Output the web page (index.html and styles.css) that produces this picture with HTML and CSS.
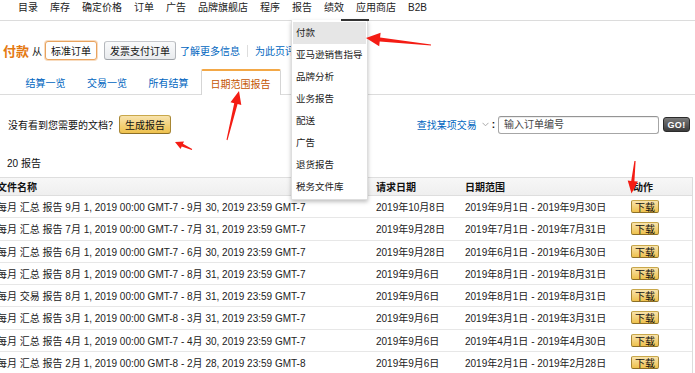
FILE: index.html
```html
<!DOCTYPE html>
<html lang="zh-CN">
<head>
<meta charset="utf-8">
<title>付款 - 日期范围报告</title>
<link rel="stylesheet" href="styles.css">
</head>
<body>
<div class="page">
  <nav class="topnav">
    <span class="nav-item">目录</span>
    <span class="nav-item">库存</span>
    <span class="nav-item">确定价格</span>
    <span class="nav-item">订单</span>
    <span class="nav-item">广告</span>
    <span class="nav-item">品牌旗舰店</span>
    <span class="nav-item">程序</span>
    <span class="nav-item">报告</span>
    <span class="nav-item">绩效</span>
    <span class="nav-item">应用商店</span>
    <span class="nav-item">B2B</span>
  </nav>

  <div class="title-row">
    <span class="page-title">付款</span>
    <span class="from">从</span>
    <span class="btn btn-selected">标准订单</span>
    <span class="btn btn-plain">发票支付订单</span>
    <a class="link learn">了解更多信息</a>
    <span class="sep"></span>
    <a class="link">为此页评级</a>
  </div>

  <div class="tabs">
    <span class="tab">结算一览</span>
    <span class="tab">交易一览</span>
    <span class="tab">所有结算</span>
    <span class="tab tab-active">日期范围报告</span>
  </div>

  <div class="action-row">
    <div class="action-left">
      <span>没有看到您需要的文档？</span>
      <span class="btn-yellow">生成报告</span>
    </div>
    <div class="action-right">
      <a class="link">查找某项交易</a>
      <svg class="chev" width="7" height="5" viewBox="0 0 7 5"><path d="M0.5 0.8 L3.5 3.8 L6.5 0.8" fill="none" stroke="#aaa" stroke-width="1"/></svg>
      <span class="colon">:</span>
      <input class="search" type="text" placeholder="输入订单编号">
      <span class="go">GO!</span>
    </div>
  </div>

  <div class="count">20 报告</div>

  <div class="table">
    <div class="row head">
      <div class="c1">文件名称</div>
      <div class="c2">请求日期</div>
      <div class="c3">日期范围</div>
      <div class="c4">动作</div>
    </div>
    <div class="row">
      <div class="c1">每月 汇总 报告 9月 1, 2019 00:00 GMT-7 - 9月 30, 2019 23:59 GMT-7</div>
      <div class="c2">2019年10月8日</div>
      <div class="c3">2019年9月1日 - 2019年9月30日</div>
      <div class="c4"><span class="dl">下载</span></div>
    </div>
    <div class="row">
      <div class="c1">每月 汇总 报告 7月 1, 2019 00:00 GMT-7 - 7月 31, 2019 23:59 GMT-7</div>
      <div class="c2">2019年9月28日</div>
      <div class="c3">2019年7月1日 - 2019年7月31日</div>
      <div class="c4"><span class="dl">下载</span></div>
    </div>
    <div class="row">
      <div class="c1">每月 汇总 报告 6月 1, 2019 00:00 GMT-7 - 6月 30, 2019 23:59 GMT-7</div>
      <div class="c2">2019年9月28日</div>
      <div class="c3">2019年6月1日 - 2019年6月30日</div>
      <div class="c4"><span class="dl">下载</span></div>
    </div>
    <div class="row">
      <div class="c1">每月 汇总 报告 8月 1, 2019 00:00 GMT-7 - 8月 31, 2019 23:59 GMT-7</div>
      <div class="c2">2019年9月6日</div>
      <div class="c3">2019年8月1日 - 2019年8月31日</div>
      <div class="c4"><span class="dl">下载</span></div>
    </div>
    <div class="row">
      <div class="c1">每月 交易 报告 8月 1, 2019 00:00 GMT-7 - 8月 31, 2019 23:59 GMT-7</div>
      <div class="c2">2019年9月6日</div>
      <div class="c3">2019年8月1日 - 2019年8月31日</div>
      <div class="c4"><span class="dl">下载</span></div>
    </div>
    <div class="row">
      <div class="c1">每月 汇总 报告 3月 1, 2019 00:00 GMT-8 - 3月 31, 2019 23:59 GMT-7</div>
      <div class="c2">2019年9月6日</div>
      <div class="c3">2019年3月1日 - 2019年3月31日</div>
      <div class="c4"><span class="dl">下载</span></div>
    </div>
    <div class="row">
      <div class="c1">每月 汇总 报告 4月 1, 2019 00:00 GMT-7 - 4月 30, 2019 23:59 GMT-7</div>
      <div class="c2">2019年9月6日</div>
      <div class="c3">2019年4月1日 - 2019年4月30日</div>
      <div class="c4"><span class="dl">下载</span></div>
    </div>
    <div class="row">
      <div class="c1">每月 汇总 报告 2月 1, 2019 00:00 GMT-8 - 2月 28, 2019 23:59 GMT-8</div>
      <div class="c2">2019年9月6日</div>
      <div class="c3">2019年2月1日 - 2019年2月28日</div>
      <div class="c4"><span class="dl">下载</span></div>
    </div>
  </div>

  <div class="dropdown">
    <span class="dd-mark"></span>
    <div class="dd-item dd-hover">付款</div>
    <div class="dd-item">亚马逊销售指导</div>
    <div class="dd-item">品牌分析</div>
    <div class="dd-item">业务报告</div>
    <div class="dd-item">配送</div>
    <div class="dd-item">广告</div>
    <div class="dd-item">退货报告</div>
    <div class="dd-item">税务文件库</div>
  </div>

  <svg class="arrows" width="695" height="373" viewBox="0 0 695 373">
    <polygon fill="#f41c14" points="431,44.4 380.1,37.6 380.6,32.8 366,38 379.2,46.2 379.7,41.4 431,45.6"/>
    <polygon fill="#f41c14" points="227.5,140.2 237.6,104 241.3,105 239,91 230.5,102.2 234.2,103.2 226.5,139.8"/>
    <polygon fill="#f41c14" points="192.2,149 182.9,143.8 184,141.5 175,142 180.6,149 181.7,146.6 191.8,150"/>
    <polygon fill="#f41c14" points="635.6,161 634.4,181.3 637.9,181.6 631.5,193.5 627.7,180.6 631.2,180.9 634.4,161"/>
  </svg>
</div>
</body>
</html>
```

FILE: styles.css
```css
html, body {
  margin: 0;
  padding: 0;
  overflow: hidden;
  background: #fff;
}

body {
  font-family: "Liberation Sans", "Noto Sans CJK SC", sans-serif;
  font-size: 10px;
  color: #111;
}

.page {
  position: relative;
  width: 695px;
  height: 373px;
  overflow: hidden;
}

.link {
  color: #0066c0;
  text-decoration: none;
}

/* top navigation */
.topnav {
  display: flex;
  gap: 12px;
  padding-left: 18px;
  height: 20px;
  border-bottom: 1px solid #dcdcdc;
  line-height: 16px;
  color: #222;
}

/* title row */
.title-row {
  display: flex;
  align-items: center;
  height: 19px;
  margin-top: 20px;
  padding-left: 3px;
}

.page-title {
  font-size: 13px;
  font-weight: bold;
  color: #e47911;
}

.from {
  margin-left: 3px;
  margin-right: 3px;
}

.btn {
  display: inline-flex;
  align-items: center;
  height: 19px;
  box-sizing: border-box;
  padding: 0 5px;
  border-radius: 3px;
  color: #111;
}

.btn-selected {
  border: 1px solid #e8a35e;
  box-shadow: 0 0 0 1px #f8dcc0;
  background: #fefefe;
}

.btn-plain {
  margin-left: 7px;
  border: 1px solid #adb1b8;
  border-color: #c6c8cc #b3b6bb #9ea2a8;
  background: linear-gradient(#f9fafb, #e9ebee);
}

.learn {
  margin-left: 4px;
}

.sep {
  width: 1px;
  height: 12px;
  background: #ddd;
  margin: 0 7px;
}

/* tabs */
.tabs {
  display: flex;
  align-items: stretch;
  height: 25px;
  margin-top: 9px;
  padding-left: 15px;
  border-bottom: 1px solid #dcdcdc;
}

.tab {
  display: flex;
  align-items: center;
  padding: 1px 11px 0 10.5px;
  color: #0066c0;
}

.tab-active {
  margin-left: 1px;
  padding: 0 9px;
  color: #c45500;
  background: #fff;
  border: 1px solid #d5d5d5;
  border-top: 2px solid #f3a847;
  border-bottom: none;
  margin-bottom: -1px;
  border-radius: 2px 2px 0 0;
}

/* action row */
.action-row {
  display: flex;
  justify-content: space-between;
  align-items: center;
  height: 19px;
  margin-top: 20px;
  padding: 0 5px 0 8px;
}

.action-left,
.action-right {
  display: flex;
  align-items: center;
}

.btn-yellow {
  display: inline-flex;
  align-items: center;
  height: 19px;
  box-sizing: border-box;
  margin-left: 1px;
  padding: 0 5px;
  border: 1px solid #a88734;
  border-color: #c9a84b #a88734 #8c6f27;
  border-radius: 3px;
  background: linear-gradient(#f8e3ad, #eec14d);
  color: #111;
}

.chev {
  margin-left: 5px;
}

.colon {
  font-weight: bold;
  margin: 0 3px 0 3px;
}

.search {
  width: 161px;
  height: 18px;
  box-sizing: border-box;
  border: 1px solid #a6a6a6;
  border-top-color: #949494;
  border-radius: 3px;
  box-shadow: inset 0 1px 0 rgba(0, 0, 0, 0.07);
  padding: 0 5px;
  font-family: "Liberation Sans", "Noto Sans CJK SC", sans-serif;
  font-size: 10px;
  outline: none;
}

.search::placeholder {
  color: #444;
}

.go {
  display: inline-flex;
  align-items: center;
  justify-content: center;
  margin-left: 4px;
  width: 27px;
  height: 15px;
  box-sizing: border-box;
  border: 1px solid #2b2b2b;
  border-radius: 3px;
  background: linear-gradient(#7a7a7a, #3c3c3c);
  color: #fff;
  font-size: 9px;
  font-weight: bold;
  letter-spacing: 0.3px;
}

/* count */
.count {
  margin-top: 22px;
  padding-left: 7px;
  line-height: 16px;
}

/* table */
.table {
  margin-top: 5px;
  margin-left: -3px;
  width: 696px;
  box-sizing: border-box;
  border-right: 1px solid #dcdcdc;
}

.row {
  display: grid;
  grid-template-columns: 379px 89px 166px 1fr;
  align-items: center;
  height: 22.25px;
  box-sizing: border-box;
  border-bottom: 1px solid #e7e7e7;
  color: #222;
  white-space: nowrap;
}

.row.head {
  height: 19px;
  border-top: 1px solid #dedede;
  border-bottom: 1px solid #dedede;
  background: linear-gradient(#f7f7f7, #efefef);
  font-weight: bold;
  color: #111;
}

.head .c4 {
  padding-left: 2px;
}

.dl {
  display: inline-flex;
  align-items: center;
  justify-content: center;
  width: 28px;
  height: 13px;
  box-sizing: border-box;
  border: 1px solid #a88734;
  border-color: #c9a84b #a88734 #8c6f27;
  border-radius: 2px;
  background: linear-gradient(#f8e3ad, #eec14d);
  color: #111;
}

/* dropdown menu overlay */
.dropdown {
  position: absolute;
  left: 291px;
  top: 20px;
  width: 77px;
  height: 180px;
  box-sizing: border-box;
  padding-top: 2px;
  background: #fff;
  border: 1px solid #dedede;
  border-top: none;
  box-shadow: 0 2px 4px rgba(0, 0, 0, 0.25);
  z-index: 5;
  font-size: 9.5px;
}

.dd-mark {
  position: absolute;
  left: 49px;
  top: -1px;
  width: 28px;
  height: 2px;
  background: #333;
}

.dd-item {
  height: 22px;
  line-height: 22px;
  margin: 0 1px;
  padding-left: 3px;
  color: #222;
  white-space: nowrap;
}

.dd-hover {
  background: #e6e6e6;
}

/* annotation arrows */
.arrows {
  position: absolute;
  left: 0;
  top: 0;
  pointer-events: none;
  z-index: 10;
}
```
